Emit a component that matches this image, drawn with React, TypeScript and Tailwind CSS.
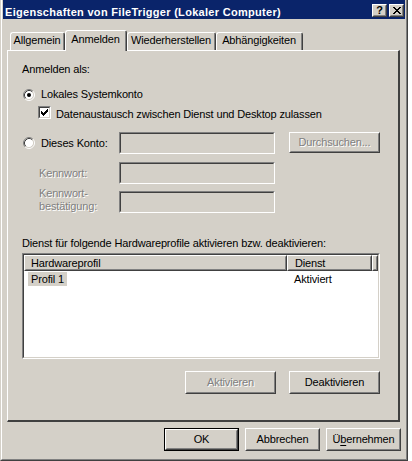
import type { ReactNode } from "react";

const DISABLED = "text-[#808080] [text-shadow:1px_1px_0_#ffffff]";

const CHECK = ["......#", ".....##", "#...###", "##.###.", "#####..", ".###...", "..#...."];
const CLOSE_X = ["##....##", ".##..##.", "..####..", "...##...", "..####..", ".##..##.", "##....##"];

function Pixels({ rows, color = "#000000" }: { rows: string[]; color?: string }) {
  return (
    <svg width={rows[0].length} height={rows.length} shapeRendering="crispEdges" className="shrink-0">
      {rows.flatMap((r, y) =>
        [...r].map((c, x) => (c === "#" ? <rect key={`${x}-${y}`} x={x} y={y} width="1" height="1" fill={color} /> : null))
      )}
    </svg>
  );
}

// raised 3d face, classic button look
function Raised({ className = "", children }: { className?: string; children?: ReactNode }) {
  return (
    <div className={`flex border border-t-white border-l-white border-r-[#404040] border-b-[#404040] bg-[#d4d0c8] ${className}`}>
      <div className="flex flex-1 items-center justify-center border border-t-[#d4d0c8] border-l-[#d4d0c8] border-r-[#808080] border-b-[#808080]">
        {children}
      </div>
    </div>
  );
}

function Sunken({ className = "", bg = "bg-[#d4d0c8]", children }: { className?: string; bg?: string; children?: ReactNode }) {
  return (
    <div className={`flex border border-t-[#808080] border-l-[#808080] border-b-white border-r-white ${className}`}>
      <div className={`flex flex-1 flex-col border border-t-[#404040] border-l-[#404040] border-b-[#d4d0c8] border-r-[#d4d0c8] ${bg}`}>
        {children}
      </div>
    </div>
  );
}

function Button({ label, w, h = "h-[23px]", disabled, isDefault }: { label: ReactNode; w: string; h?: string; disabled?: boolean; isDefault?: boolean }) {
  const face = (
    <Raised className="flex-1">
      <span className={disabled ? DISABLED : "text-black"}>{label}</span>
    </Raised>
  );
  return <div className={`flex shrink-0 ${w} ${h} ${isDefault ? "border border-black" : ""}`}>{face}</div>;
}

function Radio({ checked }: { checked?: boolean }) {
  return (
    <svg width="12" height="12" viewBox="0 0 12 12" className="shrink-0">
      <circle cx="6" cy="6" r="4.5" fill="#ffffff" />
      <path d="M2.11 9.89 A5.5 5.5 0 0 1 9.89 2.11" stroke="#808080" fill="none" />
      <path d="M9.89 2.11 A5.5 5.5 0 0 1 2.11 9.89" stroke="#ffffff" fill="none" />
      <path d="M2.82 9.18 A4.5 4.5 0 0 1 9.18 2.82" stroke="#404040" fill="none" />
      <path d="M9.18 2.82 A4.5 4.5 0 0 1 2.82 9.18" stroke="#d4d0c8" fill="none" />
      {checked && <circle cx="6" cy="6" r="2" fill="#000000" />}
    </svg>
  );
}

function Checkbox() {
  return (
    <Sunken className="h-[13px] w-[13px] shrink-0" bg="bg-white">
      <div className="pl-[1px] pt-[1px]">
        <Pixels rows={CHECK} />
      </div>
    </Sunken>
  );
}

function Tab({ label, w, active }: { label: string; w: string; active?: boolean }) {
  return (
    <div className={`flex shrink-0 ${w} ${active ? "relative z-10 -mb-[1px] h-[21px] bg-[#d4d0c8]" : "h-[18px]"}`}>
      <div className="flex flex-1 rounded-t-[3px] border-t border-l border-r border-t-white border-l-white border-r-[#404040]">
        <div className={`flex flex-1 justify-center border-r border-r-[#808080] ${active ? "pt-[2px]" : "pt-[1px]"}`}>
          {label}
        </div>
      </div>
    </div>
  );
}

export default function App() {
  return (
    <div className="h-[461px] w-[412px] bg-white text-[11px] leading-[13px] tracking-[-0.15px] text-black [font-family:'Liberation_Sans',Arial,sans-serif]">
      {/* window frame */}
      <div className="flex h-[461px] w-[408px] border-l border-r border-b border-l-[#d4d0c8] border-r-[#404040] border-b-[#404040] bg-[#d4d0c8]">
        <div className="flex flex-1 flex-col border-l border-r border-b border-l-white border-r-[#808080] border-b-[#808080] px-[1px]">
          {/* title bar */}
          <div className="flex h-[19px] shrink-0 items-start bg-[#0a246a] pl-[2px] pr-[1px]">
            <span className="flex-1 pt-[6px] font-bold tracking-[0.3px] text-white">Eigenschaften von FileTrigger (Lokaler Computer)</span>
            <Raised className="mt-[4px] h-[13px] w-[15px]">
              <span className="text-[11px] font-bold leading-[9px] tracking-normal text-black">?</span>
            </Raised>
            <Raised className="ml-[2px] mt-[4px] h-[13px] w-[15px]">
              <Pixels rows={CLOSE_X} />
            </Raised>
          </div>

          {/* tabs */}
          <div className="ml-[7px] mt-[11px] flex h-[20px] items-end">
            <Tab label="Allgemein" w="w-[55px]" />
            <Tab label="Anmelden" w="w-[62px]" active />
            <Tab label="Wiederherstellen" w="w-[89px]" />
            <Tab label="Abhängigkeiten" w="w-[87px]" />
          </div>

          {/* tab page */}
          <div className="ml-[4px] flex h-[372px] w-[393px] flex-col border-t border-l border-r-2 border-b-2 border-t-white border-l-white border-r-[#404040] border-b-[#404040] pl-[14px]">
            <p className="mt-[12px]">Anmelden als:</p>

            <div className="mt-[12px] flex h-[13px] items-center gap-[6px] pl-[1px]">
              <Radio checked />
              <span>Lokales Systemkonto</span>
            </div>

            <div className="mt-[5px] flex h-[13px] items-start gap-[5px] pl-[16px]">
              <Checkbox />
              <span className="mt-[2px]">Datenaustausch zwischen Dienst und Desktop zulassen</span>
            </div>

            <div className="mt-[13px] flex items-start">
              <div className="flex h-[22px] w-[97px] items-center gap-[6px] pl-[1px]">
                <Radio />
                <span>Dieses Konto:</span>
              </div>
              <Sunken className="h-[22px] w-[156px]" />
              <div className="ml-[14px]">
                <Button label="Durchsuchen..." w="w-[91px]" h="h-[21px]" disabled />
              </div>
            </div>

            <div className="mt-[8px] flex items-start">
              <div className={`flex h-[22px] w-[97px] items-center pl-[17px] ${DISABLED}`}>Kennwort:</div>
              <Sunken className="h-[22px] w-[156px]" />
            </div>

            <div className="mt-[3px] flex items-end">
              <div className={`w-[97px] pl-[17px] ${DISABLED}`}>
                Kennwort-
                <br />
                bestätigung:
              </div>
              <Sunken className="h-[22px] w-[156px]" />
            </div>

            <p className="mt-[24px]">Dienst für folgende Hardwareprofile aktivieren bzw. deaktivieren:</p>

            {/* hardware profile list */}
            <Sunken className="mt-[3px] h-[106px] w-[358px]" bg="bg-white">
              <div className="flex h-[16px] shrink-0">
                <Raised className="w-[263px]">
                  <span className="flex-1 pl-[5px]">Hardwareprofil</span>
                </Raised>
                <Raised className="w-[85px]">
                  <span className="flex-1 pl-[6px]">Dienst</span>
                </Raised>
                <Raised className="flex-1" />
              </div>
              <div className="mt-[1px] flex h-[14px] items-center">
                <div className="w-[263px]">
                  <span className="ml-[4px] inline-block bg-[#d4d0c8] px-[3px] leading-[14px]">Profil 1</span>
                </div>
                <span className="pl-[7px]">Aktiviert</span>
              </div>
            </Sunken>

            <div className="mt-[12px] flex w-[358px] justify-end gap-[13px]">
              <Button label="Aktivieren" w="w-[91px]" disabled />
              <Button label="Deaktivieren" w="w-[91px]" />
            </div>
          </div>

          {/* dialog buttons */}
          <div className="mt-[6px] flex justify-end gap-[6px] pr-[4px]">
            <Button label="OK" w="w-[75px]" isDefault />
            <Button label="Abbrechen" w="w-[75px]" />
            <Button
              label={
                <>
                  Ü<span className="underline underline-offset-[2px]">b</span>ernehmen
                </>
              }
              w="w-[75px]"
            />
          </div>
        </div>
      </div>
    </div>
  );
}
